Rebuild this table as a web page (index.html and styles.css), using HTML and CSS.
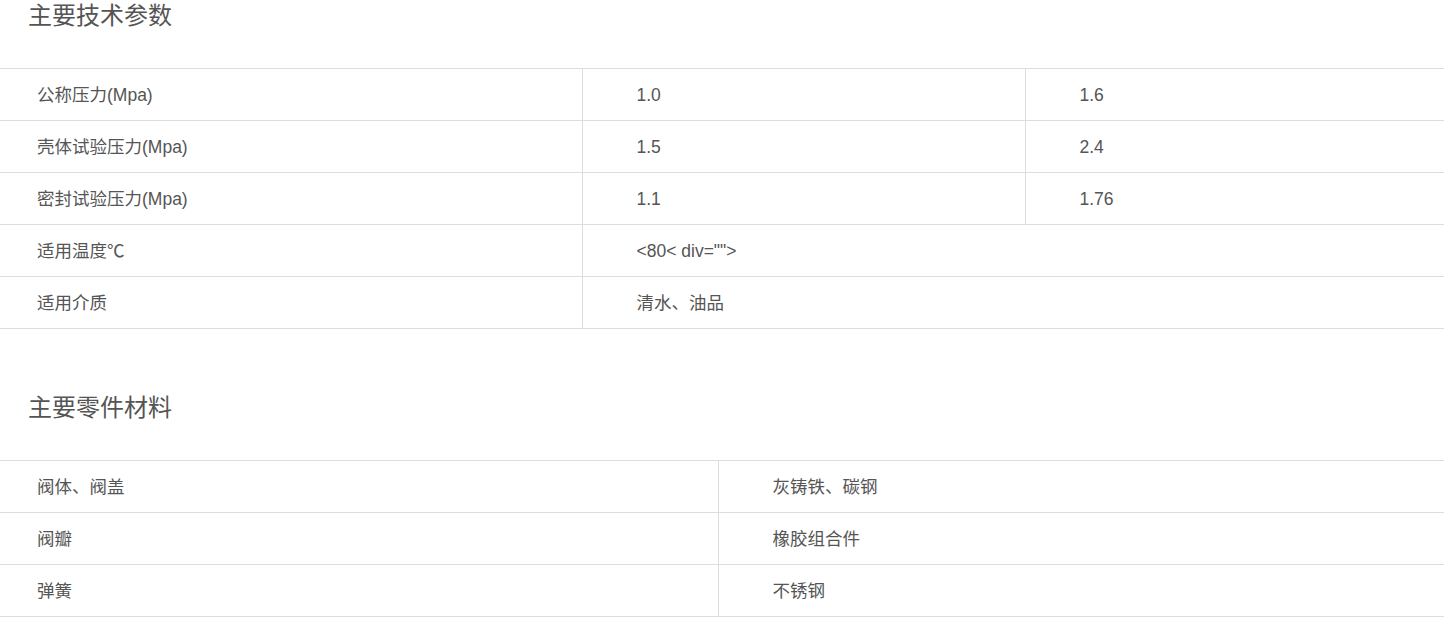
FILE: index.html
```html
<!DOCTYPE html>
<html lang="zh-CN">
<head>
<meta charset="utf-8">
<title>参数</title>
<link rel="stylesheet" href="styles.css">
</head>
<body>
<section class="block">
  <h2 class="title">主要技术参数</h2>
  <table class="spec spec-three">
    <colgroup><col class="c1"><col class="c2"><col class="c3"></colgroup>
    <tr><td>公称压力(Mpa)</td><td class="val">1.0</td><td class="val">1.6</td></tr>
    <tr><td>壳体试验压力(Mpa)</td><td class="val">1.5</td><td class="val">2.4</td></tr>
    <tr><td>密封试验压力(Mpa)</td><td class="val">1.1</td><td class="val">1.76</td></tr>
    <tr><td>适用温度℃</td><td class="val" colspan="2">&lt;80&lt; div=""&gt;</td></tr>
    <tr><td>适用介质</td><td class="val" colspan="2">清水、油品</td></tr>
  </table>
</section>
<section class="block second">
  <h2 class="title">主要零件材料</h2>
  <table class="spec spec-two">
    <colgroup><col class="m1"><col class="m2"></colgroup>
    <tr><td>阀体、阀盖</td><td class="val">灰铸铁、碳钢</td></tr>
    <tr><td>阀瓣</td><td class="val">橡胶组合件</td></tr>
    <tr><td>弹簧</td><td class="val">不锈钢</td></tr>
  </table>
</section>
</body>
</html>
```
FILE: styles.css
```css
html, body {
  margin: 0;
  padding: 0;
  background: #fff;
}
body {
  font-family: "Liberation Sans", Arial, "Noto Sans CJK SC", sans-serif;
  color: #555;
}
.block { margin: 0; }
.second { margin-top: 63px; }
.title {
  margin: 0 0 37px 0;
  padding-left: 28px;
  font-size: 24px;
  line-height: 31px;
  font-weight: normal;
  color: #555;
}
.spec {
  width: 1444px;
  border-collapse: collapse;
  table-layout: fixed;
}
.spec td {
  height: 51px;
  padding: 0 0 0 37px;
  border-top: 1px solid #ddd;
  border-bottom: 1px solid #ddd;
  font-size: 17.5px;
  line-height: 22px;
  vertical-align: middle;
  color: #555;
  box-sizing: content-box;
}
.spec td + td { border-left: 1px solid #ddd; }
.spec td.val { padding-left: 54px; }
.c1 { width: 582px; }
.c2 { width: 443px; }
.c3 { width: 419px; }
.m1 { width: 718px; }
.m2 { width: 726px; }
```
